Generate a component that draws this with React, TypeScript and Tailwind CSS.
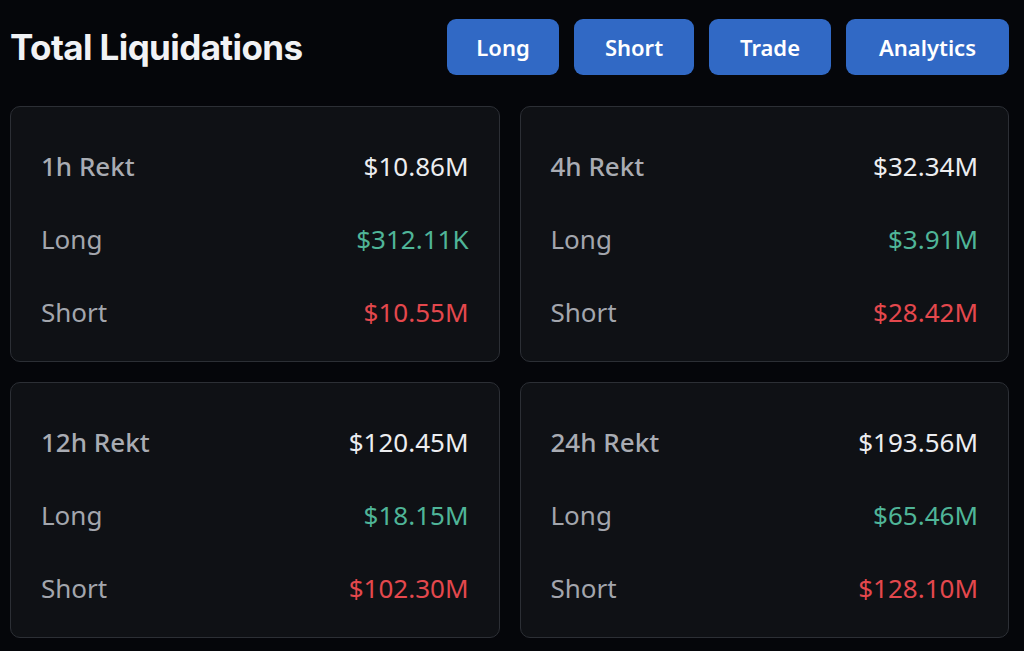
import React from 'react';

type Stat = {
  label: string;
  total: string;
  long: string;
  short: string;
};

const stats: Stat[] = [
  { label: '1h Rekt', total: '$10.86M', long: '$312.11K', short: '$10.55M' },
  { label: '4h Rekt', total: '$32.34M', long: '$3.91M', short: '$28.42M' },
  { label: '12h Rekt', total: '$120.45M', long: '$18.15M', short: '$102.30M' },
  { label: '24h Rekt', total: '$193.56M', long: '$65.46M', short: '$128.10M' },
];

const tabs = [
  { name: 'Long', w: 'w-[112px]' },
  { name: 'Short', w: 'w-[120px]' },
  { name: 'Trade', w: 'w-[122px]' },
  { name: 'Analytics', w: 'w-[163px]' },
];

const StatCard: React.FC<{ stat: Stat }> = ({ stat }) => (
  <div className="h-[256px] bg-[#0f1115] border border-[#2c2f35] rounded-[10px] px-[30px] pt-[41px] flex flex-col gap-[37px] text-[26px] leading-[36px]">
    <div className="flex justify-between items-center">
      <span className="font-medium text-[#a9acb3]">{stat.label}</span>
      <span className="text-[#ecedf0]">{stat.total}</span>
    </div>
    <div className="flex justify-between items-center">
      <span className="text-[#a3a6ad]">Long</span>
      <span className="text-[#4fb598]">{stat.long}</span>
    </div>
    <div className="flex justify-between items-center">
      <span className="text-[#a3a6ad]">Short</span>
      <span className="text-[#e4484d]">{stat.short}</span>
    </div>
  </div>
);

const App: React.FC = () => {
  return (
    <div className="min-h-[651px] w-full bg-[#05060a] pl-[10px] pr-[15px] pt-[19px] font-['Noto_Sans',sans-serif]">
      <div className="flex items-center justify-between h-[56px]">
        <h1 className="font-['Inter',sans-serif] font-bold text-[35px] tracking-[-0.6px] text-[#f1f2f5]">
          Total Liquidations
        </h1>
        <div className="flex gap-[15px]">
          {tabs.map(t => (
            <button
              key={t.name}
              className={`${t.w} h-[56px] rounded-[9px] bg-[#3169c5] text-white font-semibold text-[22px]`}
            >
              {t.name}
            </button>
          ))}
        </div>
      </div>

      <div className="grid grid-cols-2 gap-[20px] mt-[31px]">
        {stats.map(s => (
          <StatCard key={s.label} stat={s} />
        ))}
      </div>
    </div>
  );
};

export default App;
